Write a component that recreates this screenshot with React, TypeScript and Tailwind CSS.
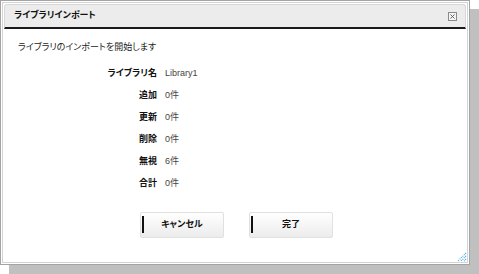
import { X } from "lucide-react";

const rows: [string, string][] = [
  ["ライブラリ名", "Library1"],
  ["追加", "0件"],
  ["更新", "0件"],
  ["削除", "0件"],
  ["無視", "6件"],
  ["合計", "0件"],
];

function Btn({ label }: { label: string }) {
  return (
    <button className="relative w-[84px] h-[26px] border border-[#e0e0e0] rounded-[2px] bg-gradient-to-b from-white to-[#ececec] text-[9px] font-bold text-[#111] flex items-center justify-center">
      <span className="absolute left-[1px] top-[3px] w-[2px] h-[17px] bg-[#111]" />
      {label}
    </button>
  );
}

export default function App() {
  return (
    <div
      className="w-[479px] h-[274px] bg-white overflow-hidden [font-feature-settings:'palt']"
      style={{ fontFamily: "'Liberation Sans', 'Noto Sans CJK JP', sans-serif" }}
    >
      <div className="relative w-[470px] h-[265px] border border-[#a4a4a4] bg-white p-[3px] flex flex-col shadow-[inset_0_0_0_1px_#fff,inset_0_0_0_2px_#d4d4d4,9px_9px_0_0_#c0c0c0]">
        {/* header */}
        <div className="h-[25px] shrink-0 flex items-center justify-between pl-[9px] pr-[8px] bg-[#ececec] border border-[#d8d8d8] border-b-2 border-b-[#1a1a1a] rounded-t-[3px]">
          <span className="text-[9px] font-bold text-[#111]">ライブラリインポート</span>
          <span className="w-[9px] h-[9px] border border-[#8a8a8a] bg-[#f4f4f4] flex items-center justify-center">
            <X className="size-[7px] text-[#555]" strokeWidth={3} />
          </span>
        </div>

        {/* body */}
        <div className="flex-1 flex flex-col">
          <div className="pl-[14px] pt-[12px] text-[9px] text-[#222] leading-[12px]">
            ライブラリのインポートを開始します
          </div>

          <div className="mt-[14px] grid grid-cols-[153px_auto] gap-x-[8px] gap-y-[10px] text-[9px] leading-[12px]">
            {rows.map(([k, v]) => (
              <div key={k} className="contents">
                <div className="text-right font-bold text-[#111]">{k}</div>
                <div className="text-[#444]">{v}</div>
              </div>
            ))}
          </div>

          <div className="mt-[23px] flex justify-center gap-[25px] pl-[3px]">
            <Btn label="キャンセル" />
            <Btn label="完了" />
          </div>
        </div>

        {/* resize grip */}
        <svg className="absolute right-[2px] bottom-[2px]" width="10" height="10" viewBox="0 0 10 10">
          <g stroke="#4aa8ec" strokeWidth="1.2" strokeDasharray="1 1">
            <line x1="9" y1="1" x2="1" y2="9" />
            <line x1="9" y1="4" x2="4" y2="9" />
            <line x1="9" y1="7" x2="7" y2="9" />
          </g>
        </svg>
      </div>
    </div>
  );
}
